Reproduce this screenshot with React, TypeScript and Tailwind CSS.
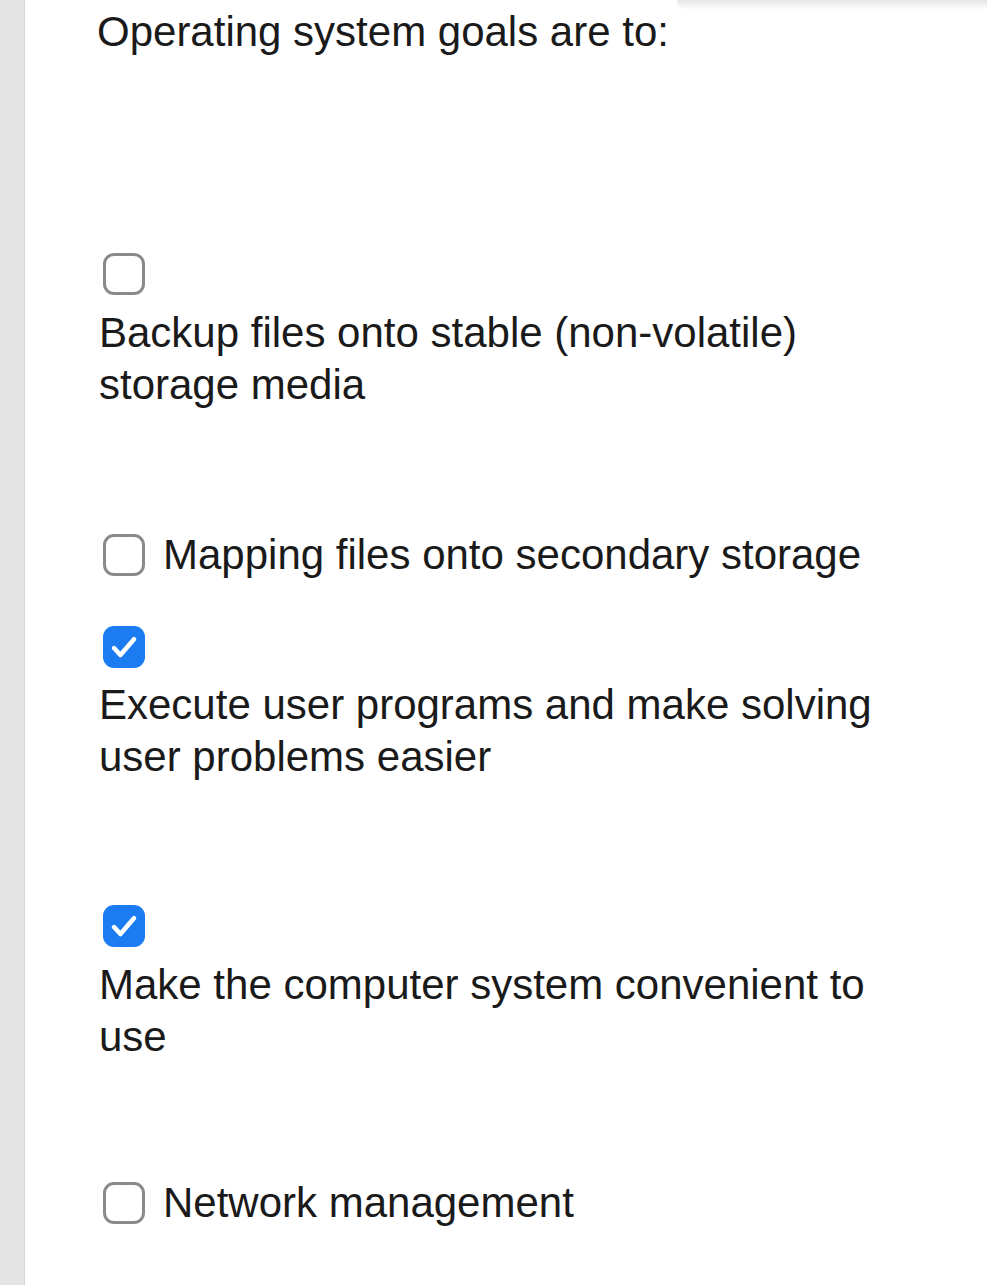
import React, { useState } from 'react';

const Box: React.FC<{ checked: boolean; onClick: () => void }> = ({ checked, onClick }) => (
  <button
    type="button"
    onClick={onClick}
    className={`ml-1 w-[42px] h-[42px] shrink-0 rounded-[11px] flex items-center justify-center ${
      checked ? 'bg-[#1b7cf1]' : 'border-[3px] border-[#8a8a8a] bg-white'
    }`}
  >
    {checked && (
      <svg width="32" height="32" viewBox="0 0 24 24" fill="none">
        <path d="M4.5 12.8l4.8 5.2L19.5 6.2" stroke="white" strokeWidth="3.4" strokeLinecap="round" strokeLinejoin="round" />
      </svg>
    )}
  </button>
);

export default function App() {
  const [checked, setChecked] = useState([false, false, true, true, false]);
  const toggle = (i: number) => setChecked((c) => c.map((v, j) => (j === i ? !v : v)));

  return (
    <div
      className="flex min-h-[1285px] bg-[#e4e4e4] text-[#1a1a1a] text-[42px] leading-[52px]"
      style={{ fontFamily: '"Liberation Sans", Arial, sans-serif' }}
    >
      <div className="w-[25px] shrink-0 border-r border-[#d6d6d6]" />
      <div className="relative flex-1 bg-white pl-[74px]">
        <div className="absolute top-0 right-0 w-[310px] h-[10px] bg-gradient-to-b from-[#e6e6e6] to-white rounded-bl-2xl" />

        <h1 className="-ml-[2px] pt-[6px] font-normal">Operating system goals are to:</h1>

        <div className="mt-[195px]">
          <Box checked={checked[0]} onClick={() => toggle(0)} />
          <p className="mt-[12px] max-w-[810px]">Backup files onto stable (non-volatile) storage media</p>
        </div>

        <div className="mt-[118px] flex items-center gap-[18px]">
          <Box checked={checked[1]} onClick={() => toggle(1)} />
          <span>Mapping files onto secondary storage</span>
        </div>

        <div className="mt-[45px]">
          <Box checked={checked[2]} onClick={() => toggle(2)} />
          <p className="mt-[11px] max-w-[810px]">Execute user programs and make solving user problems easier</p>
        </div>

        <div className="mt-[122px]">
          <Box checked={checked[3]} onClick={() => toggle(3)} />
          <p className="mt-[12px] max-w-[810px]">Make the computer system convenient to use</p>
        </div>

        <div className="mt-[114px] flex items-center gap-[18px]">
          <Box checked={checked[4]} onClick={() => toggle(4)} />
          <span>Network management</span>
        </div>
      </div>
    </div>
  );
}
